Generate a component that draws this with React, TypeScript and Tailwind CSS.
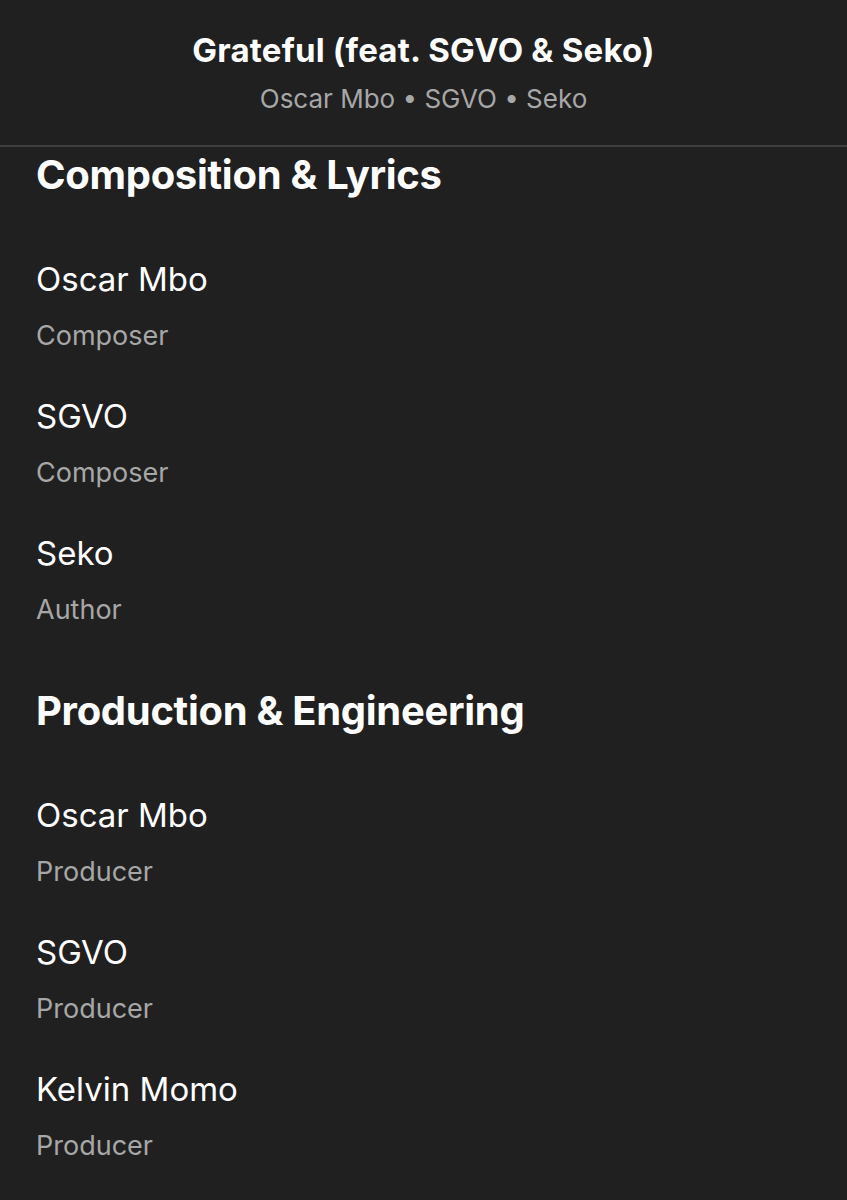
const SECTIONS = [
  {
    title: "Composition & Lyrics",
    credits: [
      { name: "Oscar Mbo", role: "Composer" },
      { name: "SGVO", role: "Composer" },
      { name: "Seko", role: "Author" },
    ],
  },
  {
    title: "Production & Engineering",
    credits: [
      { name: "Oscar Mbo", role: "Producer" },
      { name: "SGVO", role: "Producer" },
      { name: "Kelvin Momo", role: "Producer" },
    ],
  },
];

export default function App() {
  return (
    <div className="min-h-[1200px] w-full bg-[#202020] text-white font-['Inter',sans-serif] overflow-hidden">
      <header className="flex flex-col items-center pt-[30px] pb-[30px] border-b-2 border-[#3e3e3e]">
        <h1 className="text-[33px] leading-[40px] font-bold tracking-[0.2px]">Grateful (feat. SGVO &amp; Seko)</h1>
        <p className="mt-[13px] text-[26px] leading-[32px] text-[#a7a7a7]">Oscar Mbo • SGVO • Seko</p>
      </header>

      <main className="px-[36px] pt-[4px]">
        {SECTIONS.map((s, i) => (
          <section key={s.title} className={i > 0 ? "mt-[61px]" : ""}>
            <h2 className="text-[40px] leading-[48px] font-bold tracking-[-0.3px]">{s.title}</h2>
            <div className="mt-[60px] flex flex-col gap-[44px]">
              {s.credits.map((c) => (
                <div key={s.title + c.name} className="flex flex-col">
                  <span className="text-[33px] leading-[40px]">{c.name}</span>
                  <span className="mt-[21px] text-[27px] leading-[32px] text-[#a7a7a7]">{c.role}</span>
                </div>
              ))}
            </div>
          </section>
        ))}
      </main>
    </div>
  );
}
